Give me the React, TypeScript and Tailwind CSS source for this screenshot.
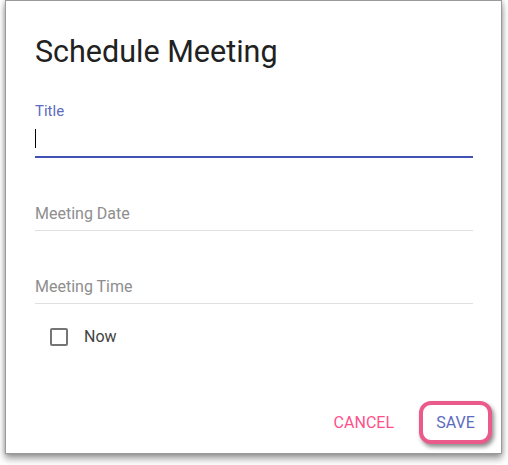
import React from 'react'

function Field({ label }: { label: string }) {
  return (
    <div className="flex flex-col border-b border-[#e0e0e0] pb-[7px]">
      <span className="text-[16px] leading-[19px] text-[#8e8e8e]">{label}</span>
    </div>
  )
}

export default function App() {
  return (
    <div className="min-h-screen bg-white font-['Roboto',sans-serif]">
      <div className="ml-[5px] flex h-[454px] w-[497px] flex-col border border-[#9a9a9a] bg-white pl-[29px] pr-[28px] shadow-[0_5px_7px_rgba(0,0,0,0.35),0_0_5px_rgba(0,0,0,0.25)]">
        <h1 className="pt-[33px] text-[30.5px] leading-[36px] font-normal text-[#212121]">
          Schedule Meeting
        </h1>

        <div className="mt-[32px] flex flex-col">
          <label className="text-[15px] leading-[18px] text-[#5c6bc0]">Title</label>
          <div className="h-[36px] pt-[9px]">
            <div className="h-[19px] w-px bg-black" />
          </div>
          <div className="h-[2px] bg-[#3f51b5]" />
        </div>

        <div className="mt-[46px]">
          <Field label="Meeting Date" />
        </div>
        <div className="mt-[46px]">
          <Field label="Meeting Time" />
        </div>

        <div className="mt-[23px] flex items-center pl-[15px]">
          <span className="h-[18px] w-[18px] rounded-[2px] border-2 border-[#757575]" />
          <span className="ml-[16px] text-[16px] leading-[19px] text-[#424242]">Now</span>
        </div>

        <div className="-mr-[19px] mt-[55px] flex items-center justify-end">
          <button className="mr-[25px] text-[16px] leading-[19px] text-[#ff4f8b]">CANCEL</button>
          <button className="flex h-[43px] w-[73px] items-center justify-center rounded-[12px] border-4 border-[#ea5a8b] bg-white text-[16px] leading-[19px] text-[#5c6bc0] shadow-[2px_3px_4px_rgba(0,0,0,0.45)]">
            SAVE
          </button>
        </div>
      </div>
    </div>
  )
}
